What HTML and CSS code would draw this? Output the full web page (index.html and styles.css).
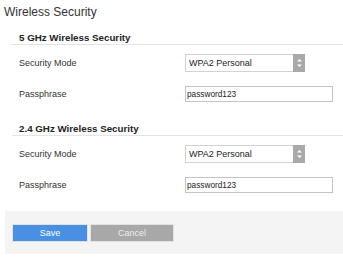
FILE: index.html
```html
<!DOCTYPE html>
<html lang="en">
<head>
  <meta charset="UTF-8">
  <title>Wireless Security</title>
  <link rel="stylesheet" href="styles.css">
</head>
<body>
<h1 class="page-title">Wireless Security</h1>

<!-- 5 GHz band -->
<div class="section">
  <h2 class="section-title">5 GHz Wireless Security</h2>
  <div class="form-row">
    <label class="form-label" for="mode5">Security Mode</label>
    <div class="select-wrap">
      <select id="mode5" class="select-box">
        <option>WPA2 Personal</option>
      </select>
      <span class="select-arrow">
        <svg width="5" height="10" viewBox="0 0 5 10"><path d="M2.5 1 L5 3.5 L0 3.5 Z M0 6.5 L5 6.5 L2.5 9 Z" fill="#fff"/></svg>
      </span>
    </div>
  </div>
  <div class="form-row row-gap">
    <label class="form-label" for="pass5">Passphrase</label>
    <input id="pass5" class="text-box" type="text" value="password123">
  </div>
</div>

<!-- 2.4 GHz band -->
<div class="section section-next">
  <h2 class="section-title">2.4 GHz Wireless Security</h2>
  <div class="form-row">
    <label class="form-label" for="mode24">Security Mode</label>
    <div class="select-wrap">
      <select id="mode24" class="select-box">
        <option>WPA2 Personal</option>
      </select>
      <span class="select-arrow">
        <svg width="5" height="10" viewBox="0 0 5 10"><path d="M2.5 1 L5 3.5 L0 3.5 Z M0 6.5 L5 6.5 L2.5 9 Z" fill="#fff"/></svg>
      </span>
    </div>
  </div>
  <div class="form-row row-gap">
    <label class="form-label" for="pass24">Passphrase</label>
    <input id="pass24" class="text-box" type="text" value="password123">
  </div>
</div>

<!-- buttons -->
<div class="footer">
  <button class="btn btn-save" type="button">Save</button>
  <button class="btn btn-cancel" type="button">Cancel</button>
</div>
</body>
</html>
```

FILE: styles.css
```css
body{
  margin: 0;
  background-color: #fff;
  color: #333;
  font-family: "Liberation Sans", Arial, sans-serif;
}

.page-title{
  margin: 0;
  padding: 4px 0 0 4px;
  font-size: 12px;
  line-height: 16px;
  font-weight: normal;
}

.section{
  margin: 12px 0 0 12px;
}

.section-next{
  margin-top: 21px;
}

.section-title{
  margin: 0;
  padding: 0 0 1px 7px;
  font-size: 9.75px;
  line-height: 11px;
  font-weight: bold;
  color: #222;
  border-bottom: 1px solid #e4e4e4;
}

.form-row{
  display: flex;
  align-items: center;
  margin-top: 9px;
  padding-left: 7px;
}

.row-gap{
  margin-top: 14px;
}

.form-label{
  width: 166px;
  font-size: 9px;
}

.select-wrap{
  display: flex;
  width: 120px;
  height: 18px;
  box-sizing: border-box;
  border: 1px solid #d2d2d2;
  background-color: #fff;
}

.select-box{
  flex: 1;
  appearance: none;
  -webkit-appearance: none;
  border: none;
  outline: none;
  background: transparent;
  padding: 0 0 0 3px;
  font-family: "Liberation Sans", Arial, sans-serif;
  font-size: 9px;
  color: #222;
}

.select-arrow{
  display: flex;
  align-items: center;
  justify-content: center;
  width: 12px;
  margin: -1px -1px -1px 0;
  background-color: #a9a9a9;
}

.text-box{
  width: 148px;
  height: 16px;
  box-sizing: border-box;
  border: 1px solid #c4c4c4;
  padding: 0 0 0 1px;
  font-family: "Liberation Sans", Arial, sans-serif;
  font-size: 8.25px;
  color: #222;
}

.footer{
  display: flex;
  gap: 2px;
  margin: 18px 0 0 5px;
  padding: 13px 7px 12px;
  background-color: #f4f4f4;
}

.btn{
  height: 18px;
  box-sizing: border-box;
  border: 1px solid #e2e2e2;
  padding: 0;
  font-family: "Liberation Sans", Arial, sans-serif;
  font-size: 9px;
  color: #fff;
}

.btn-save{
  width: 76px;
  background-color: #4a90e2;
}

.btn-cancel{
  width: 84px;
  background-color: #a8a8a8;
  color: #eee;
}
```
